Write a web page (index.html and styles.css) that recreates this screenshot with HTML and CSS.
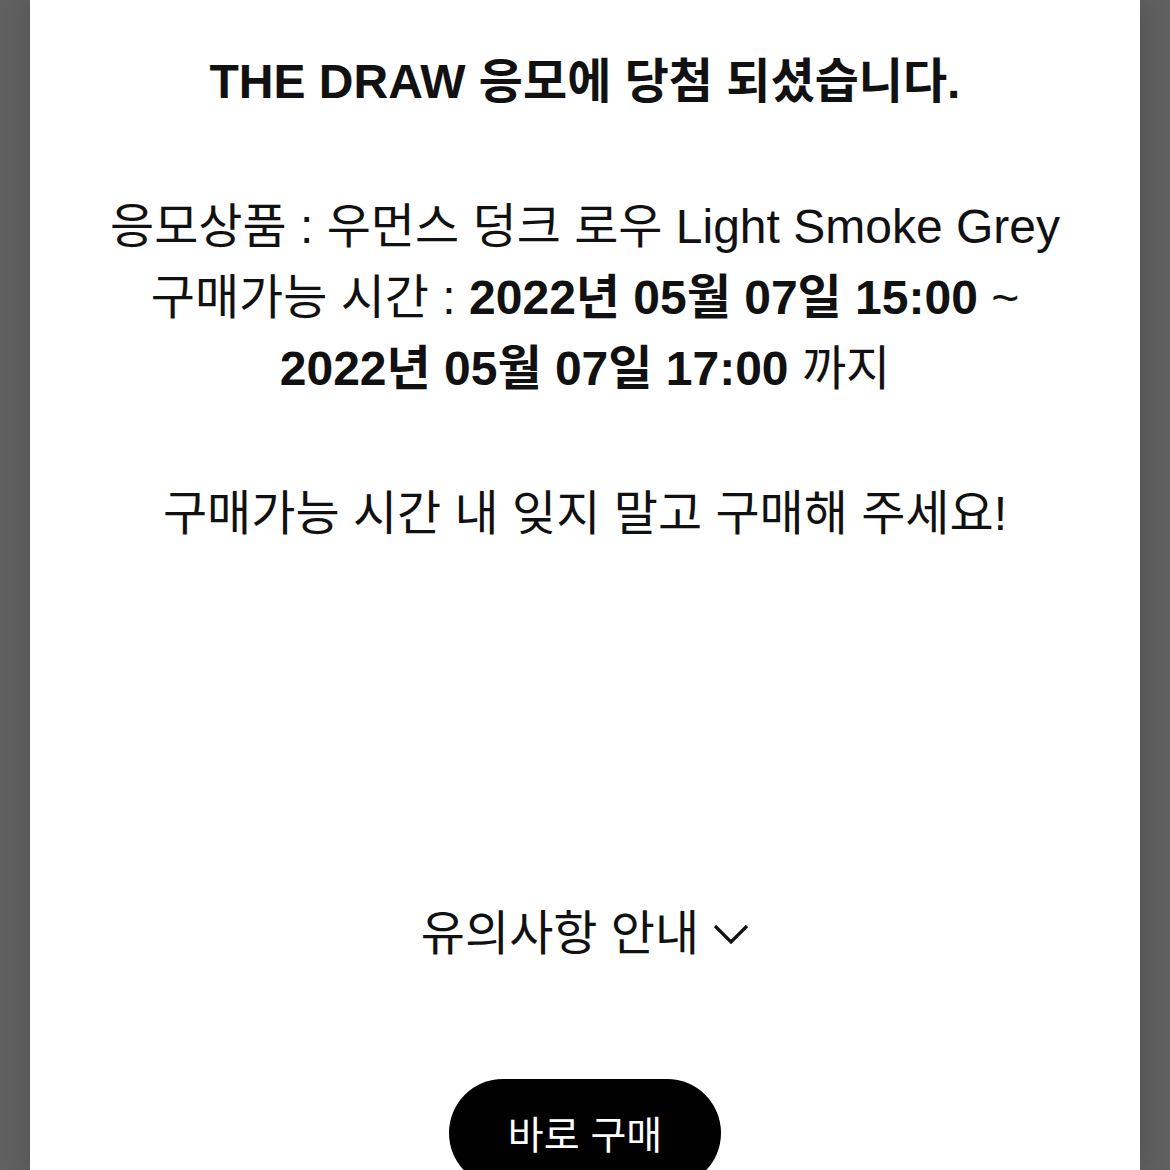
FILE: index.html
```html
<!DOCTYPE html>
<html lang="ko">
<head>
<meta charset="utf-8">
<link rel="stylesheet" href="styles.css">
</head>
<body>
<div class="card">
  <h1 class="title">THE DRAW 응모에 당첨 되셨습니다.</h1>
  <div class="info">
    <p>응모상품 : 우먼스 덩크 로우 Light Smoke Grey</p>
    <p>구매가능 시간 : <b>2022년 05월 07일 15:00</b> ~<br><b>2022년 05월 07일 17:00</b> 까지</p>
  </div>
  <p class="remind">구매가능 시간 내 잊지 말고 구매해 주세요!</p>
  <div class="notice">유의사항 안내
    <svg class="chev" width="36" height="22" viewBox="0 0 36 22"><path d="M2 3 L18 19 L34 3" fill="none" stroke="#111" stroke-width="3.2"/></svg>
  </div>
  <div class="actions"><button class="buy">바로 구매</button></div>
</div>
</body>
</html>
```
FILE: styles.css
```css
html, body { margin: 0; padding: 0; }
body {
  background: #606060;
  font-family: "Liberation Sans", "Noto Sans CJK KR", sans-serif;
  color: #111;
  height: 1170px;
  overflow: hidden;
}
.card {
  margin: 0 30px;
  background: #fff;
  height: 1170px;
  box-shadow: 0 0 24px rgba(0,0,0,0.18);
  text-align: center;
  padding-top: 46px;
  box-sizing: border-box;
}
.title {
  margin: 0;
  font-size: 48px;
  line-height: 72px;
  font-weight: 700;
}
.info { margin-top: 73px; }
.info p, .remind {
  margin: 0;
  font-size: 48px;
  line-height: 71px;
  font-weight: 400;
}
.info b { font-weight: 700; }
.remind { margin-top: 74px; }
.notice {
  margin-top: 349px;
  font-size: 48px;
  line-height: 72px;
  display: flex;
  justify-content: center;
  align-items: center;
  gap: 14px;
}
.actions { margin-top: 109px; display: flex; justify-content: center; }
.buy {
  width: 272px;
  height: 108px;
  border: none;
  border-radius: 54px;
  background: #000;
  color: #fff;
  font-family: "Liberation Sans", "Noto Sans CJK KR", sans-serif;
  font-size: 39px;
  padding: 0 0 2px;
}
```
